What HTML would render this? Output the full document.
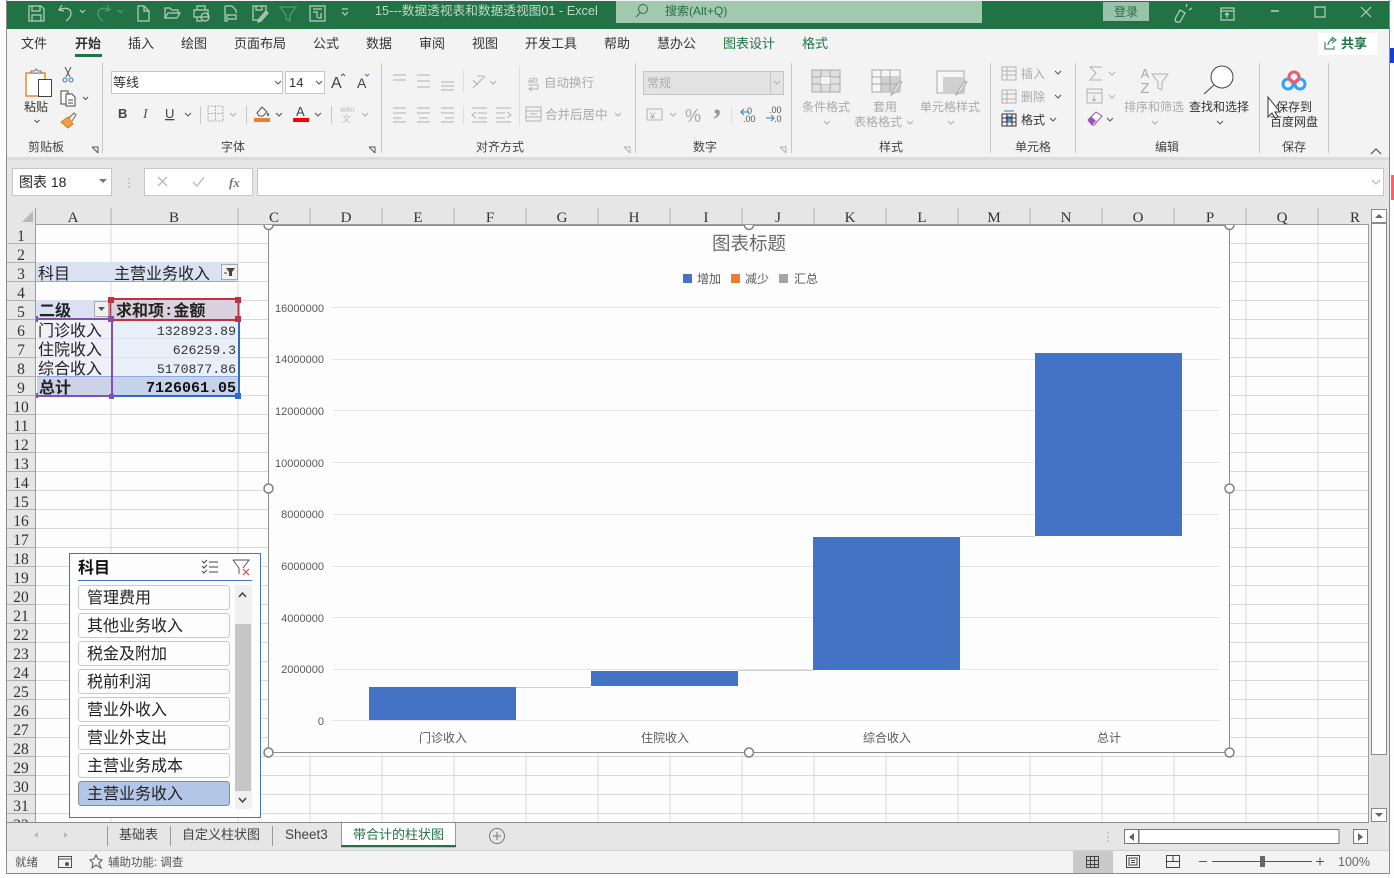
<!DOCTYPE html>
<html><head><meta charset="utf-8">
<style>
html,body{margin:0;padding:0;width:1394px;height:878px;overflow:hidden;background:#fdfdfd}
svg{display:block;position:absolute;left:0;top:0}
text{font-family:"Liberation Sans","Noto Sans CJK SC",sans-serif;font-size:12px;fill:#444}
.tb text{fill:#333;font-size:13px}
.cl text{font-family:"Liberation Serif","Noto Sans CJK SC",serif;font-size:15px;fill:#333;text-anchor:middle}
.rw text{font-family:"Liberation Serif",serif;font-size:15.5px;fill:#333;text-anchor:middle}
.c{font-size:16px;fill:#222}
.m{font-family:"Liberation Mono",monospace;font-size:13.2px;fill:#333;text-anchor:end}
.ax{font-size:11px;fill:#595959;text-anchor:end}
.xl{font-size:12px;fill:#595959;text-anchor:middle}
.sl{font-size:16px;fill:#222}
.tic{fill:none;stroke:#b7d0c1;stroke-width:1.2}
.ic{fill:none;stroke:#555;stroke-width:1}
.ig{fill:none;stroke:#b0b0b0;stroke-width:1}
.h{fill:#fff;stroke:#808080;stroke-width:1.5}
</style></head><body>
<svg width="1394" height="878" viewBox="0 0 1394 878" xmlns="http://www.w3.org/2000/svg">
<rect width="1394" height="878" fill="#fdfdfd"/>
<rect x="6" y="0" width="1383" height="873" fill="#f3f3f3"/>
<rect x="6" y="0" width="1" height="873" fill="#8a8a8a"/>
<rect x="1389" y="0" width="1" height="873" fill="#8a8a8a"/>
<rect x="6" y="873" width="1384" height="1" fill="#8a8a8a"/>
<rect x="7" y="1" width="1382" height="28" fill="#217346"/>

<!-- title bar icons -->
<g class="tic">
<path d="M29 6h12l3 3v12H29zM32 6v5h8V6M32 21v-6h9v6"/>
<path d="M62 5l-3 5 5 1M59 10c5-3 12-2 12 3 0 3-2 6-5 8"/>
<path d="M80 10l2.500 2.500 2.500-2.500"/>
<path d="M107 5l3 5-5 1M110 10c-5-3-12-2-12 3 0 3 2 6 5 8" opacity=".4"/>
<path d="M118 10l2.500 2.500 2.500-2.500" opacity=".4"/>
<path d="M138 6h6l5 5v10h-11zM144 6v5h5"/>
<path d="M165 18V8h5l2 2h6v3M165 18h12l3-5h-12z"/>
<path d="M197 10V6h8v4M194 10h14v7h-14zM197 17v4h5"/><circle cx="205" cy="17" r="4"/>
<path d="M225 6h7l4 4v3M225 6v15h3M227 15h9v4h-9z"/>
<path d="M253 6h13v7l-6 7h-7zM256 6v4h6V6M266 11l2 2-7 8-3 1 1-3z"/>
<path d="M280 7h16l-6 8v6l-4-2v-4z" opacity=".4"/>
<path d="M310 6h15v15h-15zM313 9h9M313 12h4v6M321 13v5h-3"/>
<path d="M342 9h6M342 12l3 3 3-3"/>
</g>
<text x="375" y="15" style="font-size:12.7px;fill:#c3d8cb">15---数据透视表和数据透视图01  -  Excel</text>
<rect x="616" y="1" width="366" height="22" fill="#a0c9b0"/>
<circle cx="643" cy="9" r="4.500" fill="none" stroke="#2d6d49" stroke-width="1"/><path d="M640 13l-4 4" stroke="#2d6d49"/>
<text x="665" y="15" style="font-size:12px;fill:#2b6b47">搜索(Alt+Q)</text>
<rect x="1103" y="2" width="46" height="19" fill="#98c2a9"/>
<text x="1126" y="16" text-anchor="middle" style="font-size:12px;fill:#2a6a45">登录</text>
<g class="tic">
<path d="M1175 19l5-9 5 3-5 9-4 0zM1186 7l1-3M1189 10l3-2"/>
<path d="M1221 8h13v12h-13zM1221 11h13M1227 18v-5M1225 15l2-2 2 2"/>
<path d="M1271 11h8" stroke="#dbe7df"/>
<rect x="1315" y="7" width="10" height="10"/>
<path d="M1361 7l10 10M1371 7l-10 10"/>
</g>

<!-- ribbon tabs -->
<g class="tb">
<text x="21" y="48">文件</text>
<text x="75" y="48" style="font-weight:700">开始</text>
<text x="128" y="48">插入</text>
<text x="181" y="48">绘图</text>
<text x="234" y="48">页面布局</text>
<text x="313" y="48">公式</text>
<text x="366" y="48">数据</text>
<text x="419" y="48">审阅</text>
<text x="472" y="48">视图</text>
<text x="525" y="48">开发工具</text>
<text x="604" y="48">帮助</text>
<text x="657" y="48">慧办公</text>
<text x="723" y="48" style="fill:#217346">图表设计</text>
<text x="802" y="48" style="fill:#217346">格式</text>
</g>
<rect x="75" y="54" width="27" height="3" fill="#217346"/>
<rect x="1318" y="33" width="59" height="22" fill="#fff"/>
<path d="M1330 39h3M1332 37l4 3-4 3M1334 40c-4 0-6 2-6 5M1325 42v7h9v-3" fill="none" stroke="#217346"/>
<text x="1341" y="48" style="font-size:13px;font-weight:700;fill:#217346">共享</text>
<rect x="1390" y="48" width="4" height="15" fill="#1a3fd0"/>
<rect x="1391" y="175" width="3" height="25" fill="#ff6070"/>

<!-- clipboard -->
<path d="M26 73h19v23H26z" fill="#fff" stroke="#e38b2c" stroke-width="1.5"/>
<path d="M31 73v-2h4l1-2 2 2h3v2z" fill="#fff" stroke="#777"/>
<rect x="38.500" y="79.500" width="13" height="17" fill="#fff" stroke="#444"/>
<text x="36" y="111" text-anchor="middle" style="font-size:12px;fill:#333">粘贴</text>
<path d="M34.500 120l2.500 2.500 2.500-2.500" class="ic"/>
<path d="M65 67l5 10M71 67l-5 10" class="ic"/><circle cx="65" cy="80" r="2" fill="none" stroke="#2b7cd3"/><circle cx="71" cy="80" r="2" fill="none" stroke="#2b7cd3"/>
<path d="M61 91h7v13h-7z" fill="#fff" stroke="#444"/><path d="M66 94h6l3 3v9h-9z" fill="#fff" stroke="#444"/><path d="M68 100h5M68 103h5" stroke="#444"/>
<path d="M83 97l2.500 2.500 2.500-2.500" class="ic"/>
<path d="M61 122l7-5 5 7-5 4z" fill="#f0a040" stroke="#d9782a"/><path d="M69 118l5-5 2 2-4 6" fill="none" stroke="#666"/>
<text x="46" y="151" text-anchor="middle" style="font-size:12px;fill:#444">剪贴板</text>
<path d="M92 147h6v6M92 147l6 6" class="ic"/>
<rect x="102" y="63" width="1" height="90" fill="#c8c8c8"/>

<!-- font -->
<rect x="111.500" y="71.500" width="171" height="22" fill="#fff" stroke="#c6c6c6"/>
<rect x="285.500" y="71.500" width="39" height="22" fill="#fff" stroke="#c6c6c6"/>
<text x="113" y="87" style="font-size:13px;fill:#333">等线</text>
<text x="289" y="87" style="font-size:13px;fill:#333">14</text>
<path d="M275 81l3 3 3-3M316 81l3 3 3-3" class="ic"/>
<text x="331" y="88" style="font-size:16px;fill:#444">A</text><path d="M341 76l2-2 2 2" fill="none" stroke="#555"/>
<text x="357" y="88" style="font-size:14px;fill:#444">A</text><path d="M365 74l2 2 2-2" fill="none" stroke="#2b7cd3"/>
<text x="118" y="118" style="font-size:13px;font-weight:700;fill:#444">B</text>
<text x="143" y="118" style="font-size:14px;font-style:italic;font-family:'Liberation Serif';fill:#555">I</text>
<text x="165" y="118" style="font-size:13px;fill:#444;text-decoration:underline">U</text>
<path d="M185 113l3 3 3-3" class="ic"/>
<rect x="200" y="106" width="1" height="18" fill="#c8c8c8"/>
<path d="M208 106h15v15h-15zM215.500 106v15M208 113.500h15" class="ig" stroke-dasharray="2 1"/>
<path d="M230 113l3 3 3-3" class="ig"/>
<rect x="246" y="106" width="1" height="18" fill="#c8c8c8"/>
<path d="M257 113l5-6 5 5-4 4h-4z" fill="none" stroke="#555"/><path d="M268 113v3" stroke="#2b7cd3" stroke-width="2"/>
<rect x="254" y="118" width="16" height="4" fill="#ed7d31"/>
<path d="M276 113l3 3 3-3" class="ic"/>
<text x="296" y="116" style="font-size:13px;fill:#444">A</text>
<rect x="293" y="118" width="16" height="4" fill="#f00"/>
<path d="M315 113l3 3 3-3" class="ic"/>
<rect x="331" y="106" width="1" height="18" fill="#c8c8c8"/>
<text x="340" y="112" style="font-size:8px;fill:#bbb">wén</text><text x="342" y="122" style="font-size:9px;fill:#bbb">文</text>
<path d="M362 113l3 3 3-3" class="ig"/>
<text x="233" y="151" text-anchor="middle" style="font-size:12px;fill:#444">字体</text>
<path d="M369 147h6v6M369 147l6 6" class="ic"/>
<rect x="381" y="63" width="1" height="90" fill="#c8c8c8"/>

<!-- align -->
<path d="M393 75h13M393 80h13M417 75h13M417 81h13M417 87h13M441 82h13M441 86h13M441 90h13" class="ig"/>
<path d="M393 108h13M393 113h13M393 118h9M393 122h13M417 108h13M417 113h13M419 118h9M417 122h13M441 108h13M441 113h13M445 118h9M441 122h13" class="ig"/>
<path d="M473 88l12-12M477 76h6M473 80l5 5M490 81l3 3 3-3" class="ig"/>
<rect x="463" y="70" width="1" height="22" fill="#ddd"/>
<rect x="463" y="106" width="1" height="18" fill="#ddd"/>
<path d="M472 108h15M478 113h9M478 118h9M472 122h15M476 112l-4 3 4 3M496 108h15M496 113h9M496 118h9M496 122h15M507 112l4 3-4 3" class="ig"/>
<rect x="519" y="66" width="1" height="60" fill="#ddd"/>
<text x="528" y="83" style="font-size:9px;fill:#aaa">ab</text>
<text x="544" y="87" style="font-size:12.5px;fill:#aaa">自动换行</text>
<path d="M528 85h10v4h-8M532 87l-3 2 3 2" class="ig"/>
<rect x="526" y="107" width="15" height="14" class="ig"/>
<path d="M526 111h15M526 117h15M530 114h7" class="ig"/>
<text x="545" y="119" style="font-size:12.5px;fill:#aaa">合并后居中</text>
<path d="M615 113l3 3 3-3" class="ig"/>
<text x="500" y="151" text-anchor="middle" style="font-size:12px;fill:#444">对齐方式</text>
<path d="M624 147h6v6M624 147l6 6" class="ig"/>
<rect x="635" y="63" width="1" height="90" fill="#c8c8c8"/>

<!-- number -->
<rect x="643.500" y="71.500" width="140" height="23" fill="#e3e3e3" stroke="#c6c6c6"/>
<rect x="770" y="71" width="1" height="23" fill="#c6c6c6"/>
<text x="647" y="87" style="font-size:12px;fill:#aaa">常规</text>
<path d="M774 81l3 3 3-3" class="ig"/>
<rect x="647" y="109" width="15" height="11" class="ig"/><text x="650" y="119" style="font-size:9px;fill:#aaa">¥</text>
<path d="M670 113l3 3 3-3" class="ig"/>
<text x="685" y="122" style="font-size:18px;fill:#aaa">%</text>
<text x="712" y="129" style="font-size:30px;font-weight:700;font-family:'Liberation Serif';fill:#999">’</text>
<rect x="731" y="106" width="1" height="18" fill="#ddd"/>
<text x="747" y="114" style="font-size:9px;fill:#555">0</text><text x="743" y="122" style="font-size:9px;fill:#555">.00</text>
<path d="M749 112h-8M744 109l-3 3 3 3" fill="none" stroke="#2b7cd3"/>
<text x="769" y="113" style="font-size:9px;fill:#555">.00</text><text x="774" y="122" style="font-size:9px;fill:#555">.0</text>
<path d="M766 118h8M771 115l3 3-3 3" fill="none" stroke="#2b7cd3"/>
<text x="705" y="151" text-anchor="middle" style="font-size:12px;fill:#444">数字</text>
<path d="M780 147h6v6M780 147l6 6" class="ig"/>
<rect x="791" y="63" width="1" height="90" fill="#c8c8c8"/>

<!-- styles -->
<rect x="812" y="70" width="28" height="22" fill="#e0e0e0" stroke="#aaa"/>
<path d="M812 77h28M812 84h28M821 70v22M830 70v22" stroke="#aaa" fill="none"/><rect x="821" y="77" width="9" height="7" fill="#f4f4f4"/>
<text x="826" y="111" text-anchor="middle" style="font-size:12px;fill:#aaa">条件格式</text>
<path d="M824 121l3 3 3-3" class="ig"/>
<rect x="872" y="70" width="28" height="22" fill="#f6f6f6" stroke="#aaa"/>
<rect x="881" y="78" width="19" height="14" fill="#d0d0d0"/>
<path d="M872 77h28M872 84h28M881 70v22M890 70v22" stroke="#aaa" fill="none"/>
<path d="M891 95l3-6 6-8 2 1-5 9z" fill="#ddd" stroke="#aaa"/>
<text x="885" y="111" text-anchor="middle" style="font-size:12px;fill:#aaa">套用</text>
<text x="854" y="126" style="font-size:12px;fill:#aaa">表格格式</text>
<path d="M907 121l3 3 3-3" class="ig"/>
<rect x="937" y="71" width="27" height="22" fill="#f6f6f6" stroke="#aaa"/>
<rect x="943" y="77" width="21" height="16" fill="#d0d0d0"/>
<path d="M956 95l3-6 6-8 2 1-5 9z" fill="#ddd" stroke="#aaa"/>
<text x="950" y="111" text-anchor="middle" style="font-size:12px;fill:#aaa">单元格样式</text>
<path d="M948 121l3 3 3-3" class="ig"/>
<text x="891" y="151" text-anchor="middle" style="font-size:12px;fill:#444">样式</text>
<rect x="990" y="63" width="1" height="90" fill="#c8c8c8"/>

<!-- cells -->
<rect x="1002" y="67" width="14" height="13" class="ig"/><path d="M1002 71h14M1002 75h14M1007 67v13" class="ig"/>
<text x="1021" y="78" style="font-size:12px;fill:#aaa">插入</text>
<path d="M1055 71l3 3 3-3" class="ic"/>
<rect x="1002" y="90" width="14" height="13" class="ig"/><path d="M1002 94h14M1002 99h14M1007 90v13" class="ig"/>
<text x="1021" y="101" style="font-size:12px;fill:#aaa">删除</text>
<path d="M1055 95l3 3 3-3" class="ic"/>
<rect x="1002" y="114" width="14" height="12" fill="none" stroke="#333"/><rect x="1006" y="116" width="6" height="5" fill="#5b9bd5"/><path d="M1002 118h14M1002 122h14M1007 114v12M1012 114v12" fill="none" stroke="#333"/><path d="M1004 111h10" stroke="#2b7cd3"/>
<text x="1021" y="124" style="font-size:12px;fill:#333">格式</text>
<path d="M1050 118l3 3 3-3" class="ic"/>
<text x="1033" y="151" text-anchor="middle" style="font-size:12px;fill:#444">单元格</text>
<rect x="1075" y="63" width="1" height="90" fill="#c8c8c8"/>

<!-- edit -->
<path d="M1102 67h-12l6 6-6 7h12" class="ig"/>
<path d="M1109 72l3 3 3-3" class="ig"/>
<rect x="1087" y="89" width="15" height="14" class="ig"/><path d="M1087 93h15M1094 95v6M1092 99l2 2 2-2" class="ig"/>
<path d="M1109 95l3 3 3-3" class="ig"/>
<path d="M1088 120l8-8 6 4-8 9h-2z" fill="#fff" stroke="#a04ec0"/><path d="M1088 120l4 5 4-4-4-4z" fill="#a04ec0"/>
<path d="M1107 118l3 3 3-3" class="ic"/>
<text x="1145" y="78" text-anchor="middle" style="font-size:13px;fill:#aaa">A</text>
<text x="1145" y="93" text-anchor="middle" style="font-size:15px;fill:#aaa">Z</text>
<path d="M1152 74h16l-6 8v8l-4-2v-6z" class="ig"/>
<text x="1154" y="111" text-anchor="middle" style="font-size:12px;fill:#aaa">排序和筛选</text>
<path d="M1152 121l3 3 3-3" class="ig"/>
<circle cx="1222" cy="77" r="11" fill="#fff" stroke="#444"/><path d="M1214 85l-10 9" stroke="#444" fill="none"/>
<text x="1219" y="111" text-anchor="middle" style="font-size:12px;fill:#333">查找和选择</text>
<path d="M1217 121l3 3 3-3" class="ic"/>
<text x="1167" y="151" text-anchor="middle" style="font-size:12px;fill:#444">编辑</text>
<rect x="1259" y="63" width="1" height="90" fill="#c8c8c8"/>

<!-- save -->
<circle cx="1288" cy="84" r="5" fill="none" stroke="#2fa4f0" stroke-width="3"/>
<circle cx="1300" cy="84" r="5" fill="none" stroke="#2fa4f0" stroke-width="3"/>
<circle cx="1294" cy="77" r="5" fill="none" stroke="#f0586b" stroke-width="3"/>
<text x="1294" y="111" text-anchor="middle" style="font-size:12px;fill:#333">保存到</text>
<text x="1294" y="126" text-anchor="middle" style="font-size:12px;fill:#333">百度网盘</text>
<text x="1294" y="151" text-anchor="middle" style="font-size:12px;fill:#444">保存</text>
<rect x="1328" y="63" width="1" height="90" fill="#c8c8c8"/>
<path d="M1371 154l5-5 5 5" fill="none" stroke="#444"/>
<path d="M1268 97v20l4-4 3 5 3-1-3-5h5z" fill="#fff" stroke="#333"/>

<!-- formula bar -->
<rect x="7" y="157" width="1382" height="51" fill="#e6e6e6"/>
<rect x="7" y="157" width="1382" height="3" fill="#dcdcdc"/>
<rect x="12.500" y="168.500" width="99" height="27" fill="#fff" stroke="#c6c6c6"/>
<text x="19" y="187" style="font-size:14px;fill:#222">图表 18</text>
<path d="M99 179h8l-4 4z" fill="#777"/>
<path d="M129 178v2M129 182v2M129 186v2" stroke="#aaa"/>
<rect x="144.500" y="168.500" width="108" height="27" fill="#fff" stroke="#c6c6c6"/>
<path d="M158 177l9 9M167 177l-9 9" stroke="#bbb" stroke-width="1.4"/>
<path d="M193 182l4 4 7-9" fill="none" stroke="#bbb" stroke-width="1.4"/>
<text x="229" y="187" style="font-family:'Liberation Serif';font-style:italic;font-weight:700;font-size:13px;fill:#777">fx</text>
<rect x="257.500" y="168.500" width="1126" height="27" fill="#fff" stroke="#c6c6c6"/>
<path d="M1372 180l4 4 4-4" fill="none" stroke="#aaa"/>

<!-- grid -->
<rect x="7" y="208" width="1382" height="614" fill="#e6e6e6"/>
<rect x="35" y="225" width="1333" height="597" fill="#fdfdfd"/>
<path d="M111 225V822M238 225V822M310 225V822M382 225V822M454 225V822M526 225V822M598 225V822M670 225V822M742 225V822M814 225V822M886 225V822M958 225V822M1030 225V822M1102 225V822M1174 225V822M1246 225V822M1318 225V822M35 243.500H1368M35 262.500H1368M35 281.500H1368M35 300.500H1368M35 319.500H1368M35 338.500H1368M35 357.500H1368M35 376.500H1368M35 395.500H1368M35 414.500H1368M35 433.500H1368M35 452.500H1368M35 471.500H1368M35 490.500H1368M35 509.500H1368M35 528.500H1368M35 547.500H1368M35 566.500H1368M35 585.500H1368M35 604.500H1368M35 623.500H1368M35 642.500H1368M35 661.500H1368M35 680.500H1368M35 699.500H1368M35 718.500H1368M35 737.500H1368M35 756.500H1368M35 775.500H1368M35 794.500H1368M35 813.500H1368" stroke="#d9d9d9" fill="none"/>
<path d="M35 224.500H1368M35.500 208V822" stroke="#9c9c9c"/>
<path d="M7.500 243.500H35M7 262.500H35M7 281.500H35M7 300.500H35M7 319.500H35M7 338.500H35M7 357.500H35M7 376.500H35M7 395.500H35M7 414.500H35M7 433.500H35M7 452.500H35M7 471.500H35M7 490.500H35M7 509.500H35M7 528.500H35M7 547.500H35M7 566.500H35M7 585.500H35M7 604.500H35M7 623.500H35M7 642.500H35M7 661.500H35M7 680.500H35M7 699.500H35M7 718.500H35M7 737.500H35M7 756.500H35M7 775.500H35M7 794.500H35M7 813.500H35" stroke="#b0b0b0"/>
<path d="M111 208v16M238 208v16M310 208v16M382 208v16M454 208v16M526 208v16M598 208v16M670 208v16M742 208v16M814 208v16M886 208v16M958 208v16M1030 208v16M1102 208v16M1174 208v16M1246 208v16M1318 208v16" stroke="#b0b0b0"/>
<path d="M22 222l11-11v11z" fill="#b8b8b8"/>
<g class="cl">
<text x="73" y="222">A</text><text x="174" y="222">B</text><text x="274" y="222">C</text><text x="346" y="222">D</text><text x="418" y="222">E</text><text x="490" y="222">F</text><text x="562" y="222">G</text><text x="634" y="222">H</text><text x="706" y="222">I</text><text x="778" y="222">J</text><text x="850" y="222">K</text><text x="922" y="222">L</text><text x="994" y="222">M</text><text x="1066" y="222">N</text><text x="1138" y="222">O</text><text x="1210" y="222">P</text><text x="1282" y="222">Q</text><text x="1355" y="222">R</text>
</g>
<g class="rw">
<text x="21" y="241">1</text><text x="21" y="260">2</text><text x="21" y="279">3</text><text x="21" y="298">4</text><text x="21" y="317">5</text><text x="21" y="336">6</text><text x="21" y="355">7</text><text x="21" y="374">8</text><text x="21" y="393">9</text><text x="21" y="412">10</text><text x="21" y="431">11</text><text x="21" y="450">12</text><text x="21" y="469">13</text><text x="21" y="488">14</text><text x="21" y="507">15</text><text x="21" y="526">16</text><text x="21" y="545">17</text><text x="21" y="564">18</text><text x="21" y="583">19</text><text x="21" y="602">20</text><text x="21" y="621">21</text><text x="21" y="640">22</text><text x="21" y="659">23</text><text x="21" y="678">24</text><text x="21" y="697">25</text><text x="21" y="716">26</text><text x="21" y="735">27</text><text x="21" y="754">28</text><text x="21" y="773">29</text><text x="21" y="792">30</text><text x="21" y="811">31</text><text x="21" y="830">32</text>
</g>

<!-- pivot -->
<rect x="36" y="262" width="202" height="19" fill="#d9e1f2"/>
<rect x="36" y="281" width="202" height="1" fill="#8ea9db"/>
<text x="38" y="279" class="c">科目</text>
<text x="114" y="279" class="c">主营业务收入</text>
<rect x="221.500" y="264.500" width="16" height="15" fill="#f0f0f0" stroke="#aaa"/>
<path d="M226 268h9l-3 4v4h-3v-4z" fill="#444"/><path d="M224 273h3" stroke="#444"/>
<rect x="36" y="300" width="75" height="19" fill="#d9e1f2"/>
<rect x="112" y="300" width="126" height="19" fill="#d9d1de"/>
<text x="39" y="316" class="c" style="font-weight:700">二级</text>
<text x="116" y="316" class="c" style="font-weight:700"><tspan>求和项</tspan><tspan dx="2" dy="-1">:</tspan><tspan dx="2" dy="1">金额</tspan></text>
<rect x="94.500" y="301.500" width="14" height="15" fill="#f0f0f0" stroke="#aaa"/>
<path d="M98 307h7l-3.500 4z" fill="#555"/>
<rect x="37" y="320" width="74" height="57" fill="#f1eff8"/>
<rect x="113" y="320" width="125" height="57" fill="#e9eff9"/>
<rect x="37" y="377" width="74" height="18" fill="#cdd2e8"/>
<rect x="113" y="377" width="125" height="18" fill="#c5d3ea"/>
<path d="M37 338.500h74M37 357.500h74M113 338.500h125M113 357.500h125" stroke="#dbe3f3"/>
<path d="M37 376.500h74M113 376.500h125" stroke="#8ea9db"/>
<text x="38" y="336" class="c">门诊收入</text>
<text x="38" y="355" class="c">住院收入</text>
<text x="38" y="374" class="c">综合收入</text>
<text x="39" y="393" class="c" style="font-weight:700">总计</text>
<text x="236" y="335" class="m">1328923.89</text>
<text x="236" y="354" class="m">626259.3</text>
<text x="236" y="373" class="m">5170877.86</text>
<text x="236" y="392" class="m" style="font-weight:700;fill:#111;font-size:15px">7126061.05</text>
<path d="M113 396h126V322" fill="none" stroke="#2e6cc4" stroke-width="2"/>
<path d="M37 319h75v77H37" fill="none" stroke="#7f52ad" stroke-width="2"/>
<rect x="110.500" y="299" width="128" height="21" fill="none" stroke="#c1323f" stroke-width="2"/>
<rect x="108" y="297" width="6" height="6" fill="#c1323f"/><rect x="235" y="297" width="6" height="6" fill="#c1323f"/><rect x="235" y="316" width="6" height="6" fill="#c1323f"/><rect x="108" y="316" width="6" height="6" fill="#7f52ad"/><rect x="36" y="316" width="2" height="6" fill="#7f52ad"/><rect x="36" y="393" width="2" height="5" fill="#7f52ad"/><rect x="109" y="394" width="5" height="5" fill="#7f52ad"/><rect x="235" y="393" width="6" height="6" fill="#2e6cc4"/>

<!-- chart -->
<rect x="268.500" y="225.500" width="961" height="527" fill="#fdfdfd" stroke="#8c8c8c"/>
<path d="M332 307.500h888M332 359.500h888M332 410.500h888M332 462.500h888M332 514.500h888M332 566.500h888M332 617.500h888M332 669.500h888M332 720.500h888" stroke="#e4e4e4"/>
<path d="M516 687.500h75M738 670.500h75M960 536.500h75" stroke="#d0d0d0"/>
<rect x="369" y="687" width="147" height="33" fill="#4472c4"/>
<rect x="591" y="671" width="147" height="15" fill="#4472c4"/>
<rect x="813" y="537" width="147" height="133" fill="#4472c4"/>
<rect x="1035" y="353" width="147" height="183" fill="#4472c4"/>
<text x="749" y="250" text-anchor="middle" style="font-size:18.500px;fill:#6b6b6b">图表标题</text>
<rect x="683" y="274" width="9" height="9" fill="#4472c4"/><text x="697" y="283" style="font-size:12px;fill:#595959">增加</text>
<rect x="731" y="274" width="9" height="9" fill="#ed7d31"/><text x="745" y="283" style="font-size:12px;fill:#595959">减少</text>
<rect x="779" y="274" width="9" height="9" fill="#a5a5a5"/><text x="794" y="283" style="font-size:12px;fill:#595959">汇总</text>
<text x="324" y="312" class="ax">16000000</text>
<text x="324" y="363" class="ax">14000000</text>
<text x="324" y="415" class="ax">12000000</text>
<text x="324" y="467" class="ax">10000000</text>
<text x="324" y="518" class="ax">8000000</text>
<text x="324" y="570" class="ax">6000000</text>
<text x="324" y="622" class="ax">4000000</text>
<text x="324" y="673" class="ax">2000000</text>
<text x="324" y="725" class="ax">0</text>
<text x="443" y="742" class="xl">门诊收入</text>
<text x="665" y="742" class="xl">住院收入</text>
<text x="887" y="742" class="xl">综合收入</text>
<text x="1109" y="742" class="xl">总计</text>
<clipPath id="cp"><rect x="0" y="225" width="1394" height="600"/></clipPath>
<g clip-path="url(#cp)">
<circle class="h" cx="268.500" cy="225" r="4.500"/><circle class="h" cx="749" cy="225" r="4.500"/><circle class="h" cx="1229.500" cy="225" r="4.500"/>
</g>
<circle class="h" cx="268.500" cy="488.500" r="4.500"/><circle class="h" cx="1229.500" cy="488.500" r="4.500"/>
<circle class="h" cx="268.500" cy="752.500" r="4.500"/><circle class="h" cx="749" cy="752.500" r="4.500"/><circle class="h" cx="1229.500" cy="752.500" r="4.500"/>

<!-- slicer -->
<rect x="69.500" y="553.500" width="191" height="264" fill="#fdfdfd" stroke="#4472c4"/>
<text x="78" y="573" style="font-size:16px;font-weight:700;fill:#111">科目</text>
<path d="M202 561l2 2 3-3M202 566l2 2 3-3M202 571l2 2 3-3M209 562h9M209 567h9M209 572h9" fill="none" stroke="#444"/>
<path d="M233 560h16l-6 8M233 560l6 8v6" fill="none" stroke="#555"/>
<path d="M243 569l6 6M249 569l-6 6" stroke="#e04a4a" stroke-width="1.2"/>
<rect x="78" y="580" width="174" height="1" fill="#4472c4"/>
<g fill="#fdfdfd" stroke="#c9c9c9">
<rect x="78.500" y="585.500" width="151" height="24" rx="3"/>
<rect x="78.500" y="613.500" width="151" height="24" rx="3"/>
<rect x="78.500" y="641.500" width="151" height="24" rx="3"/>
<rect x="78.500" y="669.500" width="151" height="24" rx="3"/>
<rect x="78.500" y="697.500" width="151" height="24" rx="3"/>
<rect x="78.500" y="725.500" width="151" height="24" rx="3"/>
<rect x="78.500" y="753.500" width="151" height="24" rx="3"/>
<rect x="78.500" y="781.500" width="151" height="24" rx="3" fill="#b4c6e7" stroke="#8a8a8a"/>
</g>
<text x="87" y="603" class="sl">管理费用</text>
<text x="87" y="631" class="sl">其他业务收入</text>
<text x="87" y="659" class="sl">税金及附加</text>
<text x="87" y="687" class="sl">税前利润</text>
<text x="87" y="715" class="sl">营业外收入</text>
<text x="87" y="743" class="sl">营业外支出</text>
<text x="87" y="771" class="sl">主营业务成本</text>
<text x="87" y="799" class="sl">主营业务收入</text>
<rect x="235" y="585" width="17" height="224" fill="#f0f0f0"/>
<rect x="235" y="624" width="16" height="167" fill="#c6c6c6"/>
<path d="M239 597l3.500-4 3.500 4M239 798l3.500 4 3.500-4" fill="none" stroke="#444" stroke-width="1.500"/>

<!-- vertical scrollbar -->
<rect x="1368" y="208" width="21" height="614" fill="#e6e6e6"/>
<rect x="1371" y="210" width="16" height="610" fill="#e2e2e2"/>
<rect x="1371.500" y="223.500" width="15" height="531" fill="#fdfdfd" stroke="#8a8a8a"/>
<rect x="1371.500" y="209.500" width="15" height="13" fill="#fff" stroke="#8a8a8a"/>
<path d="M1375 218l4-4 4 4z" fill="#666"/>
<rect x="1371.500" y="808.500" width="15" height="13" fill="#fff" stroke="#8a8a8a"/>
<path d="M1375 813h8l-4 4z" fill="#666"/>
<rect x="1368" y="224" width="1" height="598" fill="#9c9c9c"/>

<!-- tabs -->
<rect x="7" y="822" width="1382" height="29" fill="#e6e6e6"/>
<rect x="7" y="822" width="1362" height="1" fill="#8a8a8a"/>
<path d="M38 832l-4 3 4 3zM64 832l4 3-4 3z" fill="#bbb"/>
<rect x="107" y="826" width="1" height="20" fill="#999"/>
<text x="119" y="839" style="font-size:13px;fill:#444">基础表</text>
<rect x="170" y="826" width="1" height="20" fill="#999"/>
<text x="182" y="839" style="font-size:13px;fill:#444">自定义柱状图</text>
<rect x="272" y="826" width="1" height="20" fill="#999"/>
<text x="285" y="839" style="font-size:13.500px;fill:#444">Sheet3</text>
<path d="M341.500 823v24h114v-24" fill="#fff" stroke="#999"/>
<rect x="341" y="845" width="115" height="2" fill="#217346"/>
<text x="353" y="839" style="font-size:13px;fill:#217346">带合计的柱状图</text>
<circle cx="497" cy="836" r="7.500" fill="none" stroke="#777"/><path d="M493 836h8M497 832v8" stroke="#777"/>
<path d="M1108 832v2M1108 836v2M1108 840v2" stroke="#aaa"/>
<rect x="1124.500" y="829.500" width="14" height="14" fill="#fff" stroke="#777"/>
<path d="M1134 833l-5 4 5 4z" fill="#666"/>
<rect x="1139" y="829.500" width="200" height="14" fill="#fff" stroke="#777"/>
<rect x="1353.500" y="829.500" width="14" height="14" fill="#fff" stroke="#777"/>
<path d="M1358 833l5 4-5 4z" fill="#666"/>

<!-- status -->
<rect x="7" y="850" width="1382" height="1" fill="#d0d0d0"/>
<text x="15" y="866" style="font-size:11.500px;fill:#555">就绪</text>
<rect x="58.500" y="856.500" width="13" height="11" fill="none" stroke="#555"/><path d="M58 859h14" stroke="#555"/><circle cx="67" cy="864" r="2" fill="#555"/>
<path d="M96 855l2 4 4 1-3 3 2 5-5-3-4 3 1-5-3-3 4-1z" fill="none" stroke="#555"/>
<text x="108" y="866" style="font-size:11.500px;fill:#555">辅助功能: 调查</text>
<rect x="1073" y="851" width="40" height="22" fill="#c9c9c9"/>
<path d="M1086.500 856.500h12v11h-12zM1090.500 856.500v11M1094.500 856.500v11M1086.500 860.500h12M1086.500 864.500h12" fill="none" stroke="#444"/>
<rect x="1126.500" y="855.500" width="13" height="12" fill="none" stroke="#444"/>
<path d="M1129 858h8v7h-8zM1131 860.500h4M1131 862.500h4" fill="none" stroke="#444"/>
<path d="M1166.500 855.500h13v12h-13zM1166.500 861.500h13M1173 855.500v6" fill="none" stroke="#444"/>
<path d="M1199 861.500h8M1212 861.500h100M1316 861.500h8M1320 857.500v8" stroke="#555" fill="none"/>
<rect x="1260" y="856" width="5" height="11" fill="#666"/>
<text x="1338" y="866" style="font-size:12.500px;fill:#666">100%</text>
</svg>
</body></html>
